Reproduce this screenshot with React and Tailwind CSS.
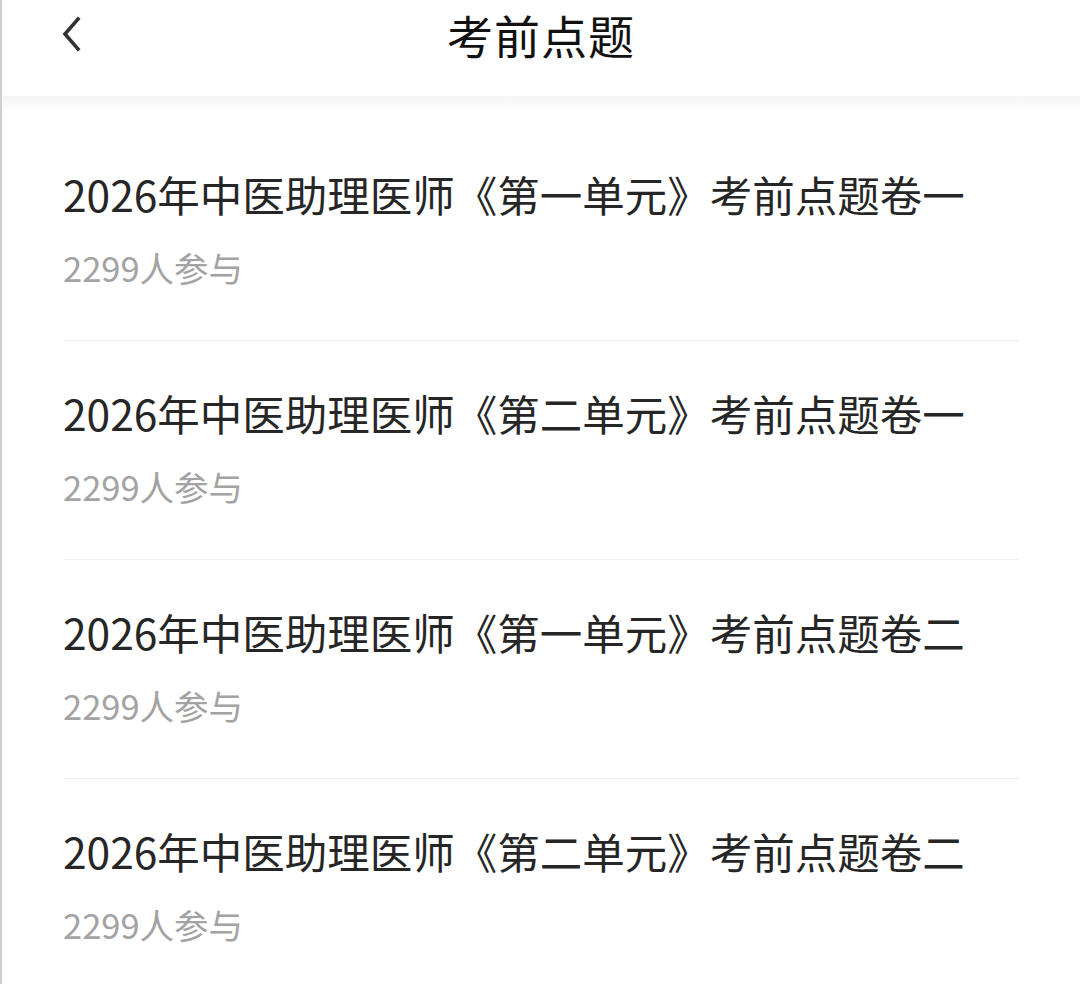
import React from "react";

const papers = [
  { title: "2026年中医助理医师《第一单元》考前点题卷一", count: 2299 },
  { title: "2026年中医助理医师《第二单元》考前点题卷一", count: 2299 },
  { title: "2026年中医助理医师《第一单元》考前点题卷二", count: 2299 },
  { title: "2026年中医助理医师《第二单元》考前点题卷二", count: 2299 },
];

const font = { fontFamily: '"Noto Sans CJK SC", "Noto Sans", sans-serif' };

export default function App() {
  return (
    <div
      className="w-[1080px] h-[984px] bg-white border-l-2 border-[#cfcfcf] overflow-hidden"
      style={font}
    >
      {/* header */}
      <div className="relative h-[96px] flex items-start justify-center">
        <button className="absolute left-[52px] top-[12px] w-[36px] h-[44px] flex items-center justify-center text-[#333]">
          <svg width="24" height="36" viewBox="0 0 24 36" fill="none">
            <path d="M18 3 L5 18 L18 33" stroke="currentColor" strokeWidth="3.6" strokeLinecap="square" />
          </svg>
        </button>
        <h1 className="text-[46px] leading-[68px] font-normal text-[#111] tracking-[1px]">考前点题</h1>
      </div>
      <div className="h-[16px] bg-gradient-to-b from-[#f5f5f5] to-white" />

      {/* list */}
      <div className="px-[61px] pt-[10px]">
        {papers.map((p, i) => (
          <div key={i} className="border-b border-[#efefef] pt-[47px] pb-[53px]">
            <div className="text-[42.5px] leading-[50px] text-[#262626] whitespace-nowrap">{p.title}</div>
            <div className="mt-[28px] text-[34.5px] leading-[40px] text-[#a3a3a3]">{p.count}人参与</div>
          </div>
        ))}
      </div>
    </div>
  );
}
